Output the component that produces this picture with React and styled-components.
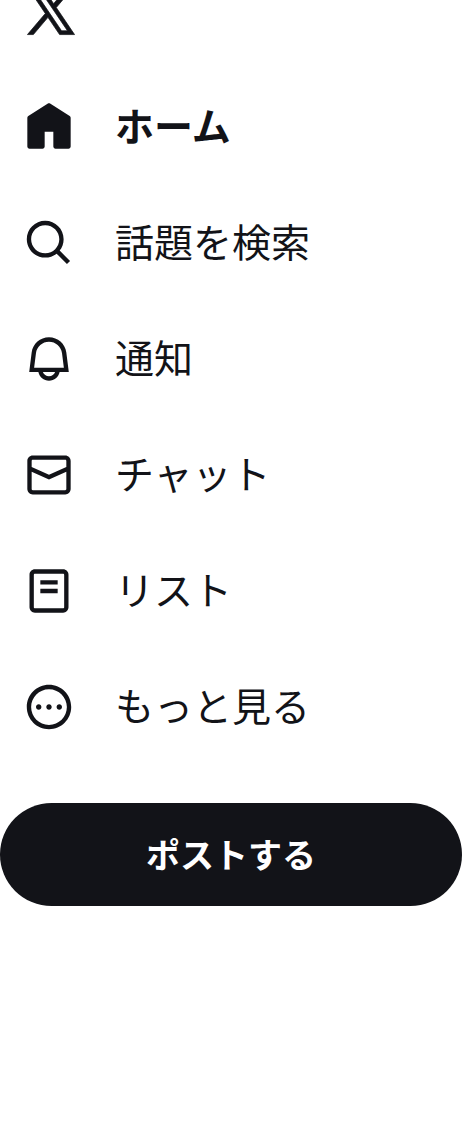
import React from 'react'
import styled, { createGlobalStyle } from 'styled-components'

const ink = '#121318'

const GlobalStyle = createGlobalStyle`
    * {
        box-sizing: border-box;
    }

    body {
        margin: 0;
        background-color: #ffffff;
        color: ${ink};
        font-family: 'Noto Sans CJK JP', sans-serif;
    }
`

const Sidebar = styled.header`
    display: flex;
    flex-direction: column;
    min-height: 100vh;
    padding-right: 14px;
    overflow: hidden;
`

const LogoLink = styled.a`
    display: flex;
    align-self: flex-start;
    height: 87px;
    margin-top: -18px;
    padding-left: 22px;
    color: inherit;
`

const Icon = styled.svg`
    flex: none;
    width: ${({ $size }) => $size || 52}px;
    height: ${({ $size }) => $size || 52}px;
    fill: currentColor;
`

const Nav = styled.nav`
    display: flex;
    flex-direction: column;
`

const NavLink = styled.a`
    display: flex;
    align-items: center;
    gap: 40px;
    height: 116px;
    padding-left: 23px;
    color: inherit;
    font-size: 39px;
    font-weight: ${({ $active }) => ($active ? 700 : 400)};
    line-height: 52px;
    text-decoration: none;
    white-space: nowrap;
`

const Label = styled.span`
    padding-bottom: 6px;
`

const PostButton = styled.button`
    height: 103px;
    margin-top: 38px;
    padding: 0 32px 2px;
    border: 0;
    border-radius: 52px;
    background-color: ${ink};
    color: #ffffff;
    font-family: inherit;
    font-size: 34px;
    font-weight: 700;
    line-height: 52px;
    cursor: pointer;
`

const logo =
    'M21.742 21.75l-7.563-11.179 7.056-8.321h-2.456l-5.691 6.714-4.54-6.714H2.359l7.29 10.776L2.25 21.75h2.456l6.035-7.118 4.818 7.118h6.191-.008zM7.739 3.818L18.81 20.182h-2.447L5.29 3.818h2.447z'

const items = [
    {
        label: 'ホーム',
        active: true,
        path: 'M12.5 1.15c-.3-.2-.7-.2-1 0L2.45 6.95c-.28.18-.45.49-.45.82V21c0 .55.45 1 1 1h6c.55 0 1-.45 1-1v-6.8h4V21c0 .55.45 1 1 1h6c.55 0 1-.45 1-1V7.77c0-.33-.17-.64-.45-.82L12.5 1.15z',
    },
    {
        label: '話題を検索',
        path: 'M10.25 3.75c-3.59 0-6.5 2.91-6.5 6.5s2.91 6.5 6.5 6.5c1.795 0 3.419-.726 4.596-1.904 1.178-1.177 1.904-2.801 1.904-4.596 0-3.59-2.91-6.5-6.5-6.5zm-8.5 6.5c0-4.694 3.806-8.5 8.5-8.5s8.5 3.806 8.5 8.5c0 1.986-.682 3.815-1.824 5.262l4.781 4.781-1.414 1.414-4.781-4.781c-1.447 1.142-3.276 1.824-5.262 1.824-4.694 0-8.5-3.806-8.5-8.5z',
    },
    {
        label: '通知',
        path: 'M19.993 9.042C19.48 5.017 16.054 2 11.996 2s-7.49 3.021-7.999 7.051L2.866 18H7.1c.463 2.282 2.481 4 4.9 4s4.437-1.718 4.9-4h4.236l-1.143-8.958zM12 20c-1.306 0-2.417-.835-2.829-2h5.658c-.412 1.165-1.523 2-2.829 2zm-6.866-4l.847-6.698C6.364 6.272 8.941 4 11.996 4s5.627 2.268 6.013 5.295L18.864 16H5.134z',
    },
    {
        label: 'チャット',
        path: 'M1.998 5.5c0-1.381 1.119-2.5 2.5-2.5h15c1.381 0 2.5 1.119 2.5 2.5v13c0 1.381-1.119 2.5-2.5 2.5h-15c-1.381 0-2.5-1.119-2.5-2.5v-13zm2.5-.5c-.276 0-.5.224-.5.5v2.764l8 3.638 8-3.638V5.5c0-.276-.224-.5-.5-.5h-15zm15.5 5.463l-8 3.636-8-3.638V18.5c0 .276.224.5.5.5h15c.276 0 .5-.224.5-.5v-8.037z',
    },
    {
        label: 'リスト',
        path: 'M3 4.5C3 3.12 4.12 2 5.5 2h13C19.88 2 21 3.12 21 4.5v15c0 1.38-1.12 2.5-2.5 2.5h-13C4.12 22 3 20.88 3 19.5v-15zM5.5 4c-.28 0-.5.22-.5.5v15c0 .28.22.5.5.5h13c.28 0 .5-.22.5-.5v-15c0-.28-.22-.5-.5-.5h-13zM16 9H8V7h8v2zm-8 2h8v2H8v-2z',
    },
    {
        label: 'もっと見る',
        path: 'M3.75 12c0-4.56 3.69-8.25 8.25-8.25s8.25 3.69 8.25 8.25-3.69 8.25-8.25 8.25S3.75 16.56 3.75 12zM12 1.75C6.34 1.75 1.75 6.34 1.75 12S6.34 22.25 12 22.25 22.25 17.66 22.25 12 17.66 1.75 12 1.75zm-4.75 11.5c.69 0 1.25-.56 1.25-1.25s-.56-1.25-1.25-1.25S6 11.31 6 12s.56 1.25 1.25 1.25zm9.5 0c.69 0 1.25-.56 1.25-1.25s-.56-1.25-1.25-1.25-1.25.56-1.25 1.25.56 1.25 1.25 1.25zM13.25 12c0 .69-.56 1.25-1.25 1.25s-1.25-.56-1.25-1.25.56-1.25 1.25-1.25 1.25.56 1.25 1.25z',
    },
]

const App = () => (
    <>
        <GlobalStyle />
        <Sidebar>
            <LogoLink href="#" aria-label="X">
                <Icon $size={58} viewBox="0 0 24 24" aria-hidden="true">
                    <path d={logo} stroke="currentColor" strokeWidth="0.3" />
                </Icon>
            </LogoLink>
            <Nav>
                {items.map(({ label, active, path }) => (
                    <NavLink key={label} href="#" $active={active} aria-current={active ? 'page' : undefined}>
                        <Icon viewBox="0 0 24 24" aria-hidden="true">
                            <path d={path} />
                        </Icon>
                        <Label>{label}</Label>
                    </NavLink>
                ))}
            </Nav>
            <PostButton type="button">ポストする</PostButton>
        </Sidebar>
    </>
)

export default App
